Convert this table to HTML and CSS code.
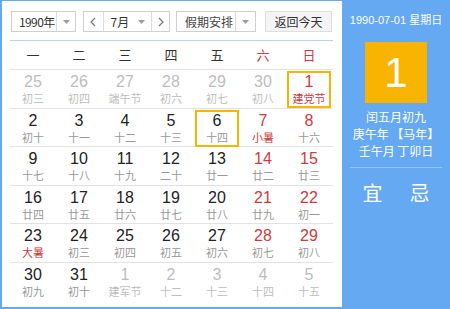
FILE: index.html
```html
<!DOCTYPE html>
<html lang="zh">
<head>
<meta charset="utf-8">
<link rel="stylesheet" href="styles.css">
</head>
<body>
<div class="app">
  <div class="main">
    <div class="toolbar">
      <div class="sel year">
        <span class="val">1990年</span>
        <span class="arr"><svg width="7" height="4" viewBox="0 0 7 4"><path d="M0 0H7L3.5 4Z" fill="#9a9a9a"/></svg></span>
      </div>
      <div class="sel month">
        <span class="nav nav-l"><svg width="6" height="10" viewBox="0 0 6 10"><path d="M5 1L1 5L5 9" fill="none" stroke="#777" stroke-width="1.2"/></svg></span>
        <span class="val">7月</span>
        <span class="arr arr-m"><svg width="7" height="4" viewBox="0 0 7 4"><path d="M0 0H7L3.5 4Z" fill="#9a9a9a"/></svg></span>
        <span class="nav nav-r"><svg width="6" height="10" viewBox="0 0 6 10"><path d="M1 1L5 5L1 9" fill="none" stroke="#777" stroke-width="1.2"/></svg></span>
      </div>
      <div class="sel holi">
        <span class="val">假期安排</span>
        <span class="arr"><svg width="7" height="4" viewBox="0 0 7 4"><path d="M0 0H7L3.5 4Z" fill="#9a9a9a"/></svg></span>
      </div>
      <button class="today">返回今天</button>
    </div>
    <div class="cal">
      <div class="head">
        <span>一</span><span>二</span><span>三</span><span>四</span><span>五</span><span class="we">六</span><span class="we">日</span>
      </div>
      <div class="row">
        <div class="d other"><b>25</b><i>初三</i></div>
        <div class="d other"><b>26</b><i>初四</i></div>
        <div class="d other"><b>27</b><i>端午节</i></div>
        <div class="d other"><b>28</b><i>初六</i></div>
        <div class="d other"><b>29</b><i>初七</i></div>
        <div class="d other"><b>30</b><i>初八</i></div>
        <div class="d we sel-day"><b>1</b><i class="fest">建党节</i></div>
      </div>
      <div class="row">
        <div class="d"><b>2</b><i>初十</i></div>
        <div class="d"><b>3</b><i>十一</i></div>
        <div class="d"><b>4</b><i>十二</i></div>
        <div class="d"><b>5</b><i>十三</i></div>
        <div class="d sel-day"><b>6</b><i>十四</i></div>
        <div class="d we"><b>7</b><i class="fest">小暑</i></div>
        <div class="d we"><b>8</b><i>十六</i></div>
      </div>
      <div class="row">
        <div class="d"><b>9</b><i>十七</i></div>
        <div class="d"><b>10</b><i>十八</i></div>
        <div class="d"><b>11</b><i>十九</i></div>
        <div class="d"><b>12</b><i>二十</i></div>
        <div class="d"><b>13</b><i>廿一</i></div>
        <div class="d we"><b>14</b><i>廿二</i></div>
        <div class="d we"><b>15</b><i>廿三</i></div>
      </div>
      <div class="row">
        <div class="d"><b>16</b><i>廿四</i></div>
        <div class="d"><b>17</b><i>廿五</i></div>
        <div class="d"><b>18</b><i>廿六</i></div>
        <div class="d"><b>19</b><i>廿七</i></div>
        <div class="d"><b>20</b><i>廿八</i></div>
        <div class="d we"><b>21</b><i>廿九</i></div>
        <div class="d we"><b>22</b><i>初一</i></div>
      </div>
      <div class="row">
        <div class="d"><b>23</b><i class="fest">大暑</i></div>
        <div class="d"><b>24</b><i>初三</i></div>
        <div class="d"><b>25</b><i>初四</i></div>
        <div class="d"><b>26</b><i>初五</i></div>
        <div class="d"><b>27</b><i>初六</i></div>
        <div class="d we"><b>28</b><i>初七</i></div>
        <div class="d we"><b>29</b><i>初八</i></div>
      </div>
      <div class="row last">
        <div class="d"><b>30</b><i>初九</i></div>
        <div class="d"><b>31</b><i>初十</i></div>
        <div class="d other"><b>1</b><i>建军节</i></div>
        <div class="d other"><b>2</b><i>十二</i></div>
        <div class="d other"><b>3</b><i>十三</i></div>
        <div class="d other"><b>4</b><i>十四</i></div>
        <div class="d other"><b>5</b><i>十五</i></div>
      </div>
    </div>
  </div>
  <div class="side">
    <div class="date">1990-07-01 星期日</div>
    <div class="big">1</div>
    <div class="lunar">
      <div>闰五月初九</div>
      <div>庚午年 【马年】</div>
      <div>壬午月 丁卯日</div>
    </div>
    <div class="sep"></div>
    <div class="yiji"><span>宜</span><span>忌</span></div>
  </div>
</div>
</body>
</html>
```

FILE: styles.css
```css
html, body {
  margin: 0;
  padding: 0;
}
body {
  width: 450px;
  height: 309px;
  overflow: hidden;
  font-family: "Liberation Sans", "Noto Sans CJK SC", sans-serif;
}
.app {
  display: flex;
  height: 309px;
  background: #64a9f2;
}
.main {
  width: 340px;
  margin: 1px 0 2px 2px;
  background: #fff;
  padding: 0 0 0 8px;
  box-sizing: border-box;
}
.toolbar {
  height: 40px;
  box-sizing: border-box;
  padding: 10px 0 0 1px;
  width: 323px;
  border-bottom: 1px solid #b3d4f3;
  display: flex;
  align-items: flex-start;
}
.sel {
  display: flex;
  height: 21px;
  box-sizing: border-box;
  border: 1px solid #cfcfcf;
  background: #fff;
  font-size: 12px;
  color: #333;
  line-height: 19px;
  white-space: nowrap;
}
.sel .val {
  box-sizing: border-box;
  white-space: nowrap;
}
.sel .arr {
  display: flex;
  align-items: center;
  justify-content: center;
  border-left: 1px solid #dcdcdc;
}
.year {
  width: 65px;
}
.year .val {
  width: 45px;
  padding-left: 7px;
  font-family: "Noto Sans CJK SC", sans-serif;
  font-size: 12px;
  letter-spacing: -0.6px;
}
.year .arr {
  width: 18px;
}
.month {
  width: 87px;
  margin-left: 7px;
}
.month .nav {
  display: flex;
  align-items: center;
  justify-content: center;
}
.month .nav-l {
  width: 19px;
  border-right: 1px solid #dcdcdc;
}
.month .val {
  width: 29px;
  padding-left: 7px;
  font-family: "Noto Sans CJK SC", sans-serif;
}
.month .arr-m {
  width: 20px;
  border-left: none;
  border-right: 1px solid #dcdcdc;
}
.month .nav-r {
  width: 17px;
}
.holi {
  width: 80px;
  margin-left: 6px;
}
.holi .val {
  width: 59px;
  padding-left: 8px;
  color: #444;
  font-family: "Noto Sans CJK SC", sans-serif;
}
.holi .arr {
  width: 19px;
}
.today {
  margin-left: 9px;
  width: 67px;
  height: 21px;
  box-sizing: border-box;
  border: 1px solid #dedede;
  background: #f4f4f4;
  font-family: "Noto Sans CJK SC", sans-serif;
  font-size: 12px;
  color: #333;
  padding: 0;
  line-height: 19px;
}
.cal {
  width: 323px;
}
.head {
  display: grid;
  grid-template-columns: repeat(7, 46px);
  height: 29px;
  box-sizing: border-box;
  border-bottom: 1px solid #e2e2e2;
  font-family: "Noto Sans CJK SC", sans-serif;
  font-size: 13px;
  color: #333;
  line-height: 28px;
  text-align: center;
}
.head .we {
  color: #cf3a3e;
}
.row {
  display: grid;
  grid-template-columns: repeat(7, 46px);
  height: 38.6px;
  box-sizing: border-box;
  border-bottom: 1px solid #e2e2e2;
}
.row.last {
  border-bottom: none;
}
.d {
  margin: 1px;
  border: 2px solid transparent;
  display: flex;
  flex-direction: column;
  align-items: center;
  text-align: center;
}
.d b {
  font-weight: normal;
  font-size: 16px;
  line-height: 18px;
  color: #222;
}
.d i {
  font-style: normal;
  font-family: "Noto Sans CJK SC", sans-serif;
  font-size: 11px;
  line-height: 15px;
  color: #999;
}
.d.we b {
  color: #cf3a3e;
}
.d i.fest {
  color: #cf3a3e;
}
.d.other b,
.d.other i {
  color: #bdbdbd;
}
.d.sel-day {
  border-color: #f6b600;
}
.side {
  width: 108px;
  color: #fff;
  text-align: center;
  font-family: "Liberation Sans", "Noto Sans CJK SC", sans-serif;
}
.date {
  margin-top: 13px;
  font-size: 11px;
  line-height: 14px;
}
.big {
  width: 62px;
  height: 61px;
  margin: 15px auto 0;
  background: #f8b400;
  font-size: 42px;
  line-height: 61px;
}
.lunar {
  margin-top: 5px;
  font-family: "Noto Sans CJK SC", sans-serif;
  font-size: 12px;
  line-height: 17px;
}
.sep {
  margin: 8px 8px 0;
  border-top: 1px solid #94c6f6;
}
.yiji {
  margin-top: 13px;
  display: flex;
  justify-content: center;
  gap: 27px;
  font-family: "Noto Sans CJK SC", sans-serif;
  font-size: 20px;
  line-height: 24px;
}
```
